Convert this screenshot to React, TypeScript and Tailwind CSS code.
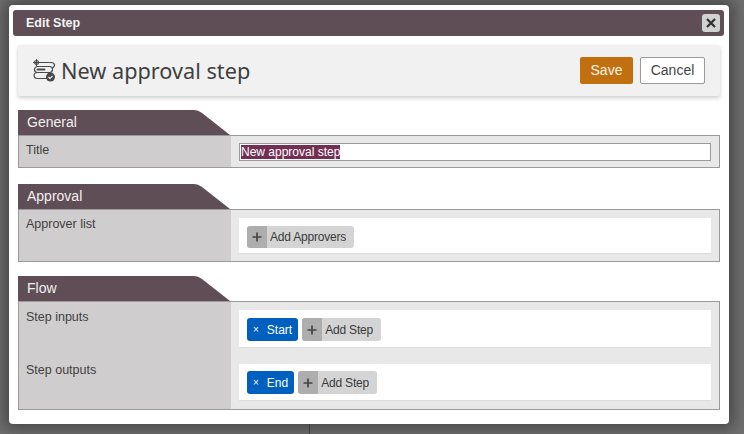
const PLUM = "#5f4e55";

function SectionTab({ title }: { title: string }) {
  return (
    <div className="flex h-[25px] w-[212px]">
      <div className="flex-1 bg-[#5f4e55] pl-[9px] text-[14px] leading-[24px] text-[#f2f0f1]">{title}</div>
      <svg width="38" height="25" viewBox="0 0 38 25" className="shrink-0">
        <path d="M0 0H1.500C5 0 7 1 10 3L38 25H0Z" fill={PLUM} />
      </svg>
    </div>
  );
}

function Row({
  label,
  children,
  className = "",
  labelTop = "pt-[7px]",
}: {
  label?: string;
  children: React.ReactNode;
  className?: string;
  labelTop?: string;
}) {
  return (
    <div className={`flex ${className}`}>
      <div className={`w-[212px] shrink-0 bg-[#cfcdcd] pl-[7px] text-[12.500px] leading-[14px] text-[#3f3f3f] ${labelTop}`}>
        {label}
      </div>
      <div className="flex-1 bg-[#e8e8e8] px-2 py-2">{children}</div>
    </div>
  );
}

function Card({ children, className }: { children: React.ReactNode; className: string }) {
  return <div className={`flex items-start gap-1 border-b border-[#dddddd] bg-white pl-2 ${className}`}>{children}</div>;
}

function AddButton({ label, height = "h-[23px]" }: { label: string; height?: string }) {
  return (
    <div className={`flex items-stretch overflow-hidden rounded-[3px] bg-[#d4d4d4] text-[12px] tracking-[-0.2px] text-[#3a3a3a] ${height}`}>
      <span className="flex w-[20px] items-center justify-center bg-[#aeaeae]">
        <svg width="10" height="10" viewBox="0 0 10 10">
          <path d="M5 0.500V9.500M0.500 5H9.500" stroke="#444" strokeWidth="1.700" />
        </svg>
      </span>
      <span className="flex items-center pl-[3px] pr-[8px]">{label}</span>
    </div>
  );
}

function Tag({ label }: { label: string }) {
  return (
    <div className="flex h-[23px] items-center rounded-[3px] bg-[#0060bf] pl-[6px] pr-[6px] text-[12px] text-white">
      <span className="mr-[8px] text-[10px] leading-none">×</span>
      {label}
    </div>
  );
}

function StepIcon() {
  return (
    <svg width="26" height="24" viewBox="0 0 26 24" fill="none" stroke="#4a4a4a" strokeWidth="1.200" className="shrink-0">
      <circle cx="5.500" cy="3.500" r="2" />
      <path d="M5.500 0V7M2 3.500H9" strokeWidth="1" />
      <path d="M8 3.500H20C24.500 3.500 24.500 8 21 9" />
      <rect x="3.500" y="7.500" width="18" height="6" rx="3" />
      <rect x="5.500" y="9.500" width="9" height="2" rx="1" fill="#4a4a4a" stroke="none" />
      <path d="M6.500 13.500C2 13.500 2 19.500 6.500 19.500H16" />
      <circle cx="19.500" cy="18" r="4.500" fill="#4a4a4a" stroke="none" />
      <path d="M17.500 18L19 19.500L21.500 16.800" stroke="#fff" strokeWidth="1.100" />
    </svg>
  );
}

export default function App() {
  return (
    <div className="relative h-[434px] w-[744px] overflow-hidden bg-[#6f6f6f] pl-[9px] pt-[5px] font-['Liberation_Sans',Arial,sans-serif]">
      {/* page behind the overlay */}
      <div className="absolute bottom-0 left-[309px] top-[420px] w-px bg-[#444444]" />

      <div className="relative flex h-[419px] w-[720px] flex-col rounded-[4px] bg-white px-1 pt-[5px] shadow-[0_0_14px_5px_rgba(40,40,40,0.55)]">
        <div className="mr-px flex h-[26px] shrink-0 items-center justify-between rounded-[3px] bg-[#5f4e55] pl-[13px] pr-[4px]">
          <span className="text-[12.500px] font-bold text-[#f5f3f4]">Edit Step</span>
          <button className="flex h-[18px] w-[18px] items-center justify-center rounded-[3px] bg-[#d2d2d2]">
            <svg width="10" height="10" viewBox="0 0 10 10">
              <path d="M1 1L9 9M9 1L1 9" stroke="#2f2f2f" strokeWidth="2.200" />
            </svg>
          </button>
        </div>

        <div className="px-[5px]">
          <div className="mt-[9px] flex h-[51px] items-center justify-between rounded-[2px] bg-[#f1f1f1] pl-[13px] pr-[15px] shadow-[0_2px_4px_rgba(0,0,0,0.2)]">
            <div className="flex items-center gap-[4px]">
              <StepIcon />
              <span className="font-['Noto_Sans',sans-serif] text-[21.700px] leading-none text-[#3f3f3f]">New approval step</span>
            </div>
            <div className="flex items-center gap-[7px] text-[14px]">
              <button className="h-[27px] w-[53px] rounded-[2px] bg-[#c2700f] text-[#fbf3e8]">Save</button>
              <button className="h-[27px] w-[65px] rounded-[2px] border border-[#9a9a9a] bg-white text-[#444444]">Cancel</button>
            </div>
          </div>

          <div className="mt-[14px]">
            <SectionTab title="General" />
            <div className="border border-[#9a9a9a]">
              <Row label="Title" className="h-[31px]">
                <div className="-mt-[1px] flex h-[18px] items-center border border-[#9a9a9a] bg-white pl-[1px]">
                  <span className="bg-[#722f56] text-[12px] leading-[14px] text-white">New approval step</span>
                </div>
              </Row>
            </div>
          </div>

          <div className="mt-[16px]">
            <SectionTab title="Approval" />
            <div className="border border-[#9a9a9a]">
              <Row label="Approver list" className="h-[51px]">
                <Card className="h-[36px] pt-[8px]">
                  <AddButton label="Add Approvers" height="h-[22px]" />
                </Card>
              </Row>
            </div>
          </div>

          <div className="mt-[14px]">
            <SectionTab title="Flow" />
            <div className="border border-[#9a9a9a]">
              <Row label="Step inputs" className="h-[54px]" labelTop="pt-[8px]">
                <Card className="h-[38px] pt-[8px]">
                  <Tag label="Start" />
                  <AddButton label="Add Step" />
                </Card>
              </Row>
              <Row label="Step outputs" className="h-[53px]">
                <Card className="h-[37px] pt-[7px]">
                  <Tag label="End" />
                  <AddButton label="Add Step" />
                </Card>
              </Row>
            </div>
          </div>
        </div>
      </div>
    </div>
  );
}
